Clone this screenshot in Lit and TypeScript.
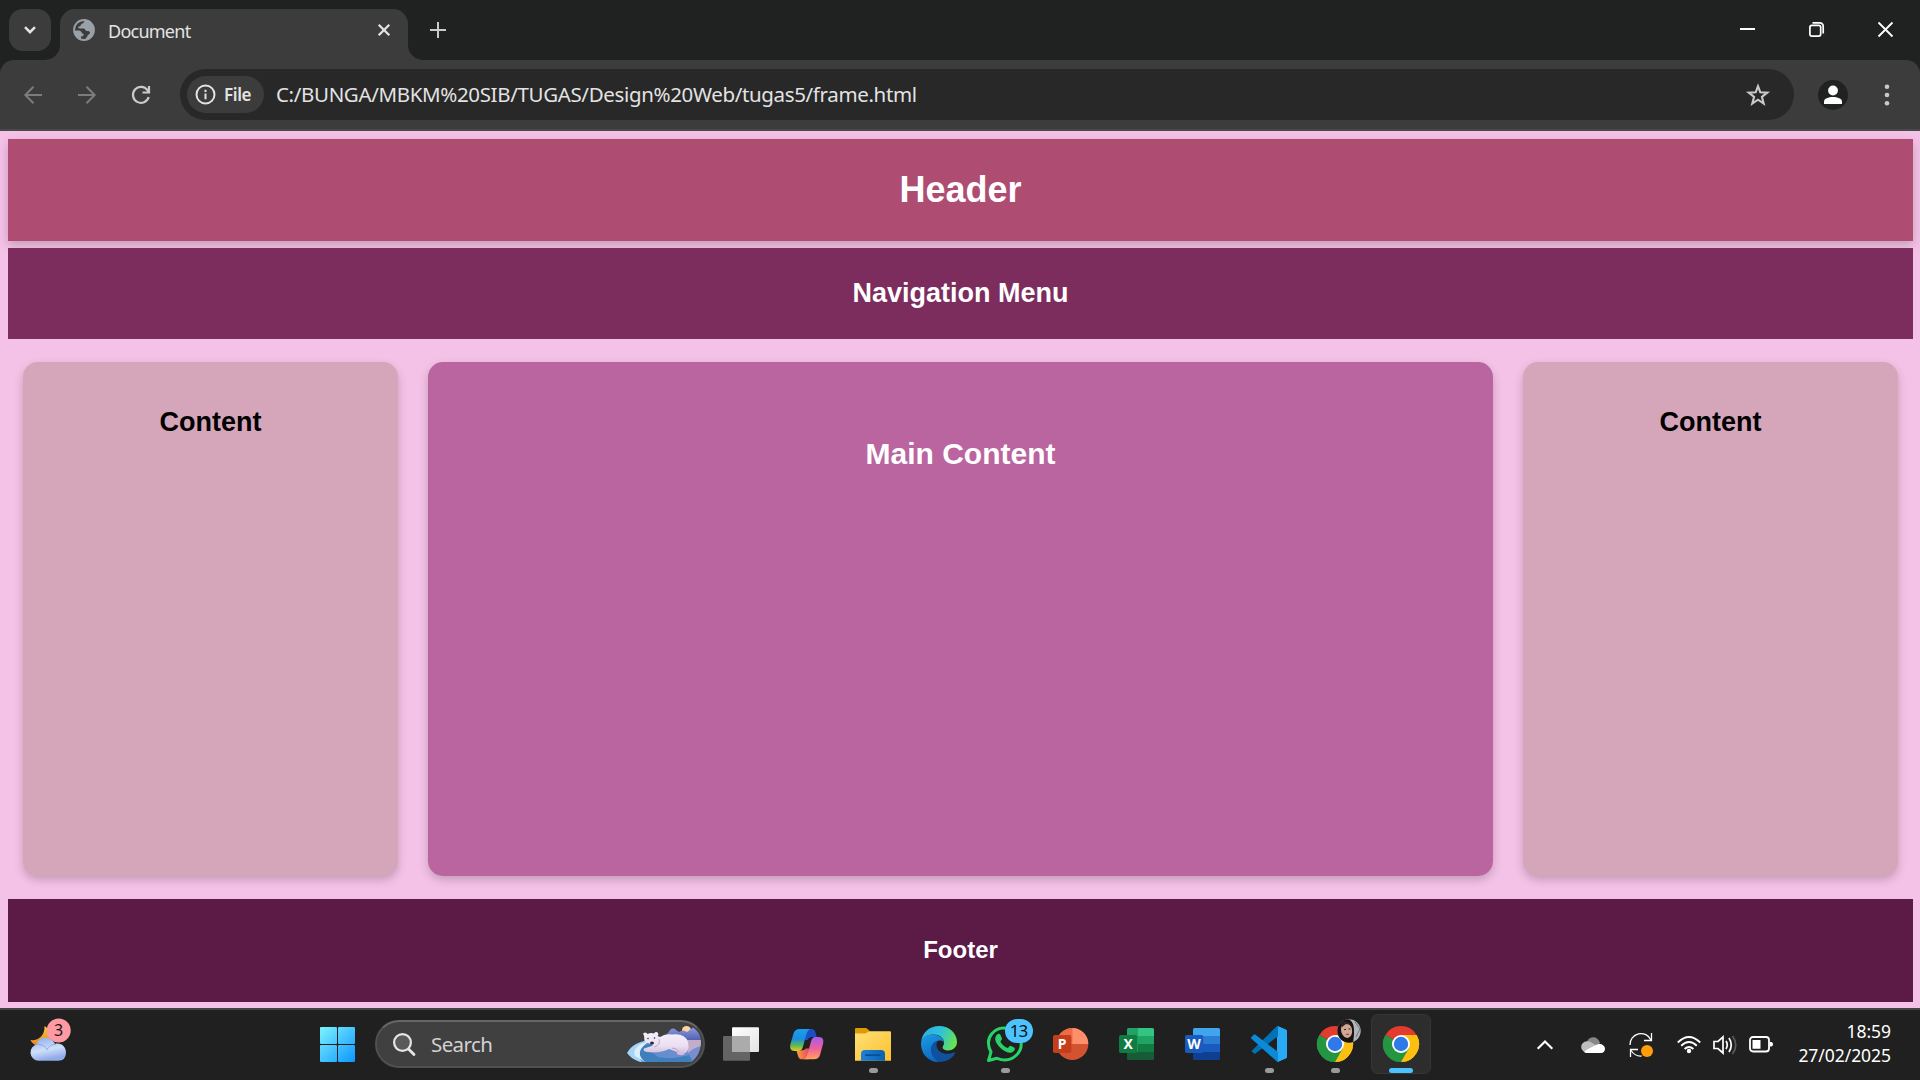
import { LitElement, html, css, svg, nothing } from "lit";
import { customElement, property } from "lit/decorators.js";

const UI_FONT = css`"Segoe UI", "Noto Sans", "Open Sans", sans-serif`;

@customElement("browser-chrome")
class BrowserChrome extends LitElement {
  static styles = css`
    :host { display: block; font-family: ${UI_FONT}; color: #e3e3e3; background: #202221; }
    svg { display: block; flex: none; overflow: visible; }
    .strip { display: flex; height: 60px; padding-left: 9px; box-sizing: border-box; }
    .picker { width: 42px; height: 42px; margin: 9px 9px 0 0; border-radius: 14px; background: #3c3c3c; display: grid; place-items: center; }
    .tab { position: relative; width: 348px; height: 51px; margin-top: 9px; box-sizing: border-box; padding: 0 18px 9px 13px; border-radius: 15px 15px 0 0; background: #3c3c3c; display: flex; align-items: center; }
    .flare { position: absolute; bottom: 0; }
    .flare.l { left: -15px; }
    .flare.r { right: -15px; }
    .title { flex: 1; padding: 2px 0 0 13px; font-size: 18px; line-height: 24px; letter-spacing: -0.75px; }
    .plus { margin: 22px 0 0 22px; }
    .win { margin-left: auto; display: flex; gap: 54px; padding: 22px 27px 0 0; }
    .bar { display: flex; align-items: center; height: 71px; box-sizing: border-box; background: #3c3c3c; border-bottom: 2px solid #484a49; border-radius: 14px 14px 0 0; padding: 0 29px 0 24px; }
    .nav { display: flex; gap: 36px; margin-right: 30px; }
    .omni { flex: 1; height: 51px; border-radius: 26px; background: #282828; display: flex; align-items: center; padding: 0 24px 0 7px; }
    .chip { width: 77px; height: 37px; border-radius: 19px; background: #3c3c3c; display: flex; align-items: center; gap: 8px; padding-left: 8px; box-sizing: border-box; font-size: 17px; font-weight: 600; letter-spacing: -0.4px; }
    .url { flex: 1; margin-left: 12px; padding-bottom: 2px; font-size: 20.5px; line-height: 28px; letter-spacing: -0.35px; white-space: nowrap; }
    .me { margin: 0 35px 0 24px; }
  `;
  render() {
    return html`
      <div class="strip">
        <div class="picker"><svg width="14" height="8" viewBox="0 0 14 8"><path d="M2 1.2l5 5 5-5" fill="none" stroke="#e3e3e3" stroke-width="2.6"/></svg></div>
        <div class="tab">
          <svg class="flare l" width="15" height="15"><path d="M15 0V15H0A15 15 0 0 0 15 0Z" fill="#3c3c3c"/></svg>
          <svg class="flare r" width="15" height="15"><path d="M0 0V15H15A15 15 0 0 1 0 0Z" fill="#3c3c3c"/></svg>
          <svg width="22" height="22" viewBox="0 0 22 22">
            <circle cx="11" cy="11" r="10" fill="#3c3c3c" stroke="#9aa0a8" stroke-width="1.8"/>
            <path d="M13 1.2C10 1.5 12 4 9.5 4.5C7.5 5 8.5 7 6 7.5C4.500 8 5 9.500 7 9.500H10.500C12.500 9.500 12 12 14 12C16 12 17 12.500 17 14C17 15.500 15 15 14.500 17C14 18.500 13 18 12.500 20.800C17 20 21 16.500 21 11C21 5.500 17.500 1.700 13 1.200Z" fill="#9aa0a8"/>
            <path d="M1.200 11.500H6C8.500 11.500 8.500 14.500 10.500 15C11.500 15.500 10 17.500 8 17.500V20.500C4 19.500 1.200 16 1.200 11.500Z" fill="#9aa0a8"/>
          </svg>
          <span class="title">Document</span>
          <svg width="12" height="12" viewBox="0 0 12 12"><path d="M.7.7l10.600 10.600M11.300.7L.7 11.300" stroke="#e3e3e3" stroke-width="2.300"/></svg>
        </div>
        <svg class="plus" width="16" height="16" viewBox="0 0 16 16"><path d="M8 0V16M0 8H16" stroke="#c9cac9" stroke-width="2"/></svg>
        <div class="win">
          <svg width="15" height="15"><path d="M0 7H15" stroke="#fff" stroke-width="2"/></svg>
          <svg width="15" height="15" fill="none" stroke="#fff" stroke-width="1.700"><rect x=".9" y="3.300" width="10.800" height="10.800" rx="2"/><path d="M3.500.9H10.500Q14.200.9 14.200 4.600V11.500"/></svg>
          <svg width="15" height="15"><path d="M.5.5l14 14M14.500.5l-14 14" stroke="#fff" stroke-width="1.800"/></svg>
        </div>
      </div>
      <div class="bar">
        <div class="nav">
          <svg width="18" height="18" fill="none" stroke="#7b7c7b" stroke-width="2"><path d="M18 9H1.500M9.500 .8L1.300 9L9.500 17.200"/></svg>
          <svg width="18" height="18" fill="none" stroke="#7b7c7b" stroke-width="2"><path d="M0 9H16.500M8.500 .8L16.700 9L8.500 17.200"/></svg>
          <svg width="18" height="18" fill="none" stroke="#c9cac9" stroke-width="2.200"><path d="M16.700 11A8 8 0 1 1 15.500 4.200L17 6M17 0V6.500H10.500"/></svg>
        </div>
        <div class="omni">
          <div class="chip">
            <svg width="21" height="21" fill="none" stroke="#e3e3e3" stroke-width="2"><circle cx="10.500" cy="10.500" r="9"/><path d="M10.500 9.500V15.200M10.500 5.800V7.900"/></svg>
            <span>File</span>
          </div>
          <span class="url">C:/BUNGA/MBKM%20SIB/TUGAS/Design%20Web/tugas5/frame.html</span>
          <svg width="24" height="24" viewBox="0 0 24 24"><path d="M12 3.200L14.300 9.300L21.200 9.700L15.900 13.800L17.700 20.500L12 16.700L6.300 20.500L8.100 13.800L2.800 9.700L9.700 9.300Z" fill="none" stroke="#c9cac9" stroke-width="2.100"/></svg>
        </div>
        <svg class="me" width="30" height="30"><circle cx="15" cy="15" r="15" fill="#202221"/><circle cx="15" cy="10.500" r="4.900" fill="#fff"/><path d="M6 24V21.500C6 15.500 24 15.500 24 21.500V24Z" fill="#fff"/></svg>
        <svg width="8" height="24" fill="#c9cac9"><circle cx="4" cy="3.700" r="2.300"/><circle cx="4" cy="12" r="2.300"/><circle cx="4" cy="20.300" r="2.300"/></svg>
      </div>`;
  }
}

@customElement("frame-page")
class FramePage extends LitElement {
  static styles = css`
    :host { display: flex; flex-direction: column; box-sizing: border-box; height: 877px; padding: 8px 7px 6px 8px; background: #f5c2e7; font-family: Arial, "Liberation Sans", sans-serif; font-weight: 700; color: #fff; text-align: center; }
    .header { flex: none; height: 102px; line-height: 101px; background: #ae4c72; font-size: 36px; box-shadow: 0 4px 10px rgba(0, 0, 0, 0.2); }
    .menu { flex: none; height: 91px; line-height: 91px; margin-top: 7px; background: #7c2d5e; font-size: 27px; z-index: 1; }
    .columns { flex: 1; display: flex; gap: 30px; margin: 23px 15px; }
    .card { border-radius: 15px; box-sizing: border-box; box-shadow: 0 4px 10px rgba(0, 0, 0, 0.2); }
    .side { width: 375px; padding-top: 45px; background: #d5a5b9; color: #000; font-size: 27px; line-height: 31px; }
    .main { flex: 1; padding-top: 75px; background: #ba659f; font-size: 30px; line-height: 34px; }
    .footer { flex: none; height: 103px; line-height: 102px; background: #5c1a47; font-size: 24px; z-index: 1; }
  `;
  render() {
    return html`
      <div class="header">Header</div>
      <div class="menu">Navigation Menu</div>
      <div class="columns">
        <div class="card side">Content</div>
        <div class="card main">Main Content</div>
        <div class="card side">Content</div>
      </div>
      <div class="footer">Footer</div>`;
  }
}

const chrome = svg`
  <path d="M33 34L17.400 25A18 18 0 0 1 48.600 25Z" fill="#e33b2e"/>
  <path d="M33 34L48.600 25A18 18 0 0 1 33 52Z" fill="#fbbc0c"/>
  <path d="M33 34L33 52A18 18 0 0 1 17.400 25Z" fill="#249a45"/>
  <path d="M33 25H48.600A18 18 0 0 1 33 52L40.800 38.500Z" fill="#fcc010"/>
  <path d="M25.200 38.500L17.400 25A18 18 0 0 0 33 52L40.800 38.500Z" fill="#249642"/>
  <circle cx="33" cy="34" r="9" fill="#fff"/><circle cx="33" cy="34" r="7.200" fill="#3079e8"/>`;

const letterTile = (color: string, letter: string) => svg`
  <rect x="15" y="25" width="18.300" height="18" rx="1.800" fill=${color}/>
  <text x="24.100" y="39" font-size="14" font-weight="700" text-anchor="middle" fill="#fff">${letter}</text>`;

const icons: Record<string, unknown> = {
  taskview: svg`
    <rect x="15" y="26" width="27" height="24.700" rx="1" fill="#646464"/>
    <rect x="24" y="17.300" width="27" height="24.700" rx="1" fill="url(#tv)"/>
    <path d="M24 26H42V42H24Z" fill="#ababab"/>
    <defs><linearGradient id="tv" x2="1" y2="1"><stop stop-color="#fff"/><stop offset="1" stop-color="#e3e3e3"/></linearGradient></defs>`,
  copilot: svg`
    <defs>
      <linearGradient id="c1" x2="0" y2="1"><stop stop-color="#19a0ef"/><stop offset=".45" stop-color="#1b8be0"/><stop offset=".75" stop-color="#5fb858"/><stop offset="1" stop-color="#e8cb18"/></linearGradient>
      <linearGradient id="c2" x2="0" y2="1"><stop stop-color="#a45cf0"/><stop offset=".5" stop-color="#ec5fa0"/><stop offset="1" stop-color="#ffa25c"/></linearGradient>
      <linearGradient id="c3" x2="1" y2="0"><stop stop-color="#f8a33a"/><stop offset="1" stop-color="#ea4862"/></linearGradient>
    </defs>
    <path d="M31 19H37.500C40 19 41 20.500 41.700 23L42.700 27H38.500C35.500 27 34.500 28 33.500 30H31Z" fill="#1c4ec4"/>
    <path d="M34.500 49.300H28C25 49.300 24.500 47.500 23.600 44.500L22.500 40.500H27C29.500 40.500 31 39.500 32 38.500H35Z" fill="url(#c3)"/>
    <path d="M25.500 19H36.500C34 19.500 33 22 32 25.500L29 36.500C28.200 39.500 27 41 24 41H20.500C16.500 41 15.500 38 16.500 34L19.500 23.500C20.500 20.500 22.500 19 25.500 19Z" fill="url(#c1)"/>
    <path d="M40 49.300H29.500C31.800 49 32.800 46.500 33.800 43L37 31.500C37.800 28.500 39 27 41.500 27H45C49 27 50 30 49 34L46 45C45 48 43 49.300 40 49.300Z" fill="url(#c2)"/>`,
  explorer: svg`
    <defs><linearGradient id="f1" x2="1" y2="1"><stop stop-color="#ffe07a"/><stop offset="1" stop-color="#fcc02b"/></linearGradient>
    <linearGradient id="f2" x2="1" y2="0"><stop stop-color="#1c82d6"/><stop offset="1" stop-color="#0a62b4"/></linearGradient></defs>
    <path d="M15 19Q15 18 16 18H25.500Q26.500 18 27.500 19L30 21.300L27 24H15Z" fill="#dd9c03"/>
    <path d="M15 23.500H25C27.500 23.500 28 21.300 30 21.300H50Q51 21.300 51 22.300V50.700H15Z" fill="url(#f1)"/>
    <path d="M21 50.700V44Q21 40 25 40H41Q45 40 45 44V50.700Z" fill="url(#f2)"/>
    <path d="M26 45.200H40" stroke="#0a4f92" stroke-width="1.800" stroke-linecap="round"/>`,
  edge: svg`
    <defs>
      <linearGradient id="e1" x1="0" y1=".3" x2="1" y2=".6"><stop stop-color="#2baee8"/><stop offset=".5" stop-color="#2fc3d6"/><stop offset="1" stop-color="#6be44a"/></linearGradient>
      <linearGradient id="e2" x2=".4" y2="1"><stop stop-color="#1b9de2"/><stop offset="1" stop-color="#0d68c4"/></linearGradient>
    </defs>
    <path d="M15.200 32C16 22.500 23.500 16 33 16C43.500 16 51 23.500 51 32C51 37.500 46.500 40.500 42 40.500C38.500 40.500 36.500 39 36.500 37.500C36.500 36.500 38 35.500 38 32.500C38 28 33 24.500 27.500 24.500C21 24.500 16.500 28 15.200 32Z" fill="url(#e1)"/>
    <path d="M15 34C15 28 20 24.500 26.500 24.500C33 24.500 38 28.500 38 32.500C35 29 29.500 30.500 27 35C24 41 28 50 34 52C23 53 15 44 15 34Z" fill="url(#e2)"/>
    <path d="M29.500 31.500C26 33.500 24.500 37 25 41C26 47 30 51.500 35 51.900C41.500 51.500 46.500 48 48.800 43.500C49.300 42.500 48.600 42.100 47.800 42.500C40 46 31 42.500 30.500 35.500C30.400 33.500 31 32 32 30.700Z" fill="#11509c"/>`,
  whatsapp: svg`
    <path d="M16.500 50.500L19 42C11 27 24 15.500 36 18.500C50 22 53 37 44 45.500C38 51 30.500 50.500 25 48.300Z" fill="#202020" stroke="#27d366" stroke-width="3" stroke-linejoin="round"/>
    <path d="M26.500 25.500C27.500 25 28.500 25.500 29 26.500L30.500 30C30.800 31 29 32.500 28.900 33.300C30.500 36.300 33 38.300 36 39.500C37 39.500 38.200 37 39.200 37.300L43 39.200C44 40 43 43 40 44C35 45.500 25 38 23.700 31C23.500 28.500 25 26 26.500 25.500Z" transform="translate(-.5 -1.500)" fill="#27d366"/>
    <rect x="33" y="9" width="28" height="24" rx="12" fill="#4cc2ff"/>
    <text x="46.600" y="26.800" font-size="17" letter-spacing="-1" text-anchor="middle" fill="#101010">13</text>`,
  powerpoint: svg`
    <circle cx="34.300" cy="34" r="16" fill="#d35230"/><path d="M34.300 34V18A16 16 0 0 0 18.300 34Z" fill="#ed6c47"/><path d="M34.300 34V18A16 16 0 0 1 50.300 34Z" fill="#ff8f6b"/>
    ${letterTile("#c43e1c", "P")}`,
  excel: svg`
    <rect x="23" y="18" width="27" height="32" rx="1.500" fill="#185c37"/>
    <path d="M23 19.500Q23 18 24.500 18H34V42H23Z" fill="#21a366"/><path d="M34 18H48.500Q50 18 50 19.500V26H34Z" fill="#33c481"/>
    <path d="M34 26H50V34H34Z" fill="#21a366"/><path d="M34 34H50V42H34Z" fill="#107c41"/>${letterTile("#107c41", "X")}`,
  word: svg`
    <rect x="23" y="18" width="27" height="32" rx="1.500" fill="#103f91"/>
    <path d="M23 26V19.500Q23 18 24.500 18H48.500Q50 18 50 19.500V26Z" fill="#41a5ee"/>
    <path d="M23 26H50V34H23Z" fill="#2b7cd3"/><path d="M23 34H50V42H23Z" fill="#185abd"/>${letterTile("#185abd", "W")}`,
  vscode: svg`
    <path d="M42 16.300L50 19.800Q51 20.300 51 21.500V46.500Q51 47.700 50 48.200L42 51.800Q41 52 41 51V17Q41 16 42 16.300Z" fill="#2aa9f4"/>
    <path d="M15.500 41L40.500 16.500L42.300 16.300V26L19.500 43.500Q18.500 44 17.700 43.300L15.500 41Z" fill="#0072b8"/>
    <path d="M15.500 27L17.700 24.800Q18.500 24 19.500 24.700L42 42V51.700Q41.300 52 40.300 51L15.500 28.800Q14.500 27.900 15.500 27Z" fill="#0c8ad8"/>
    <path d="M42 16.300L50 19.800Q51 20.300 51 21.500V46.500Q51 47.700 50 48.200L42 51.800Z" fill="#2aa9f4"/>`,
  chromeProfile: svg`${chrome}
    <clipPath id="av"><circle cx="47" cy="21" r="11.700"/></clipPath>
    <g clip-path="url(#av)"><path d="M35 9H59V33H35Z" fill="#b2b5ba"/><path d="M35 9H46C53 12 52 20 52 25L51 33H35Z" fill="#161314"/>
    <ellipse cx="44.500" cy="20.500" rx="5.500" ry="7.500" fill="#cfa792" transform="rotate(-12 44.500 20)"/><path d="M39 13Q45 9 49 15L44 14L40 17Z" fill="#33231f"/>
    <path d="M42 19.500H44M46.500 19H48.500" stroke="#3a2622" stroke-width="1"/><path d="M44 24.300H47" stroke="#a14d4c" stroke-width="1.200"/><path d="M53 12L58 19L54 27" fill="none" stroke="#72757b" stroke-width="1"/></g>`,
  chrome,
};

interface App { icon: string; state?: "open" | "active"; }
const apps: App[] = [
  { icon: "taskview" }, { icon: "copilot" }, { icon: "explorer", state: "open" }, { icon: "edge" },
  { icon: "whatsapp", state: "open" }, { icon: "powerpoint" }, { icon: "excel" }, { icon: "word" },
  { icon: "vscode", state: "open" }, { icon: "chromeProfile", state: "open" }, { icon: "chrome", state: "active" },
];

@customElement("task-icon")
class TaskIcon extends LitElement {
  @property({ attribute: false }) app!: App;
  static styles = css`
    :host { display: block; width: 66px; height: 70px; font-family: ${UI_FONT}; }
    svg { display: block; }
  `;
  render() {
    const s = this.app.state;
    return html`<svg width="66" height="70" viewBox="0 0 66 70">
      ${s === "active" ? svg`<rect x="3.500" y="4.500" width="59" height="59" rx="6" fill="#2d2d2d" stroke="#363636"/>` : nothing}
      ${icons[this.app.icon]}
      ${s === "open" ? svg`<rect x="29" y="58" width="9" height="5" rx="2.500" fill="#9a9a9a"/>` : nothing}
      ${s === "active" ? svg`<rect x="21" y="58" width="24" height="5" rx="2.500" fill="#4cc2ff"/>` : nothing}
    </svg>`;
  }
}

@customElement("task-bar")
class TaskBar extends LitElement {
  static styles = css`
    :host { display: flex; align-items: center; box-sizing: border-box; height: 72px; border-top: 2px solid #444; background: #202020; padding: 0 29px 0 28px; font-family: ${UI_FONT}; color: #fff; }
    svg { display: block; flex: none; overflow: visible; }
    .start { margin: -1px 20px 0 248px; }
    .search { display: flex; align-items: center; box-sizing: border-box; width: 330px; height: 48px; margin: -2px 3px 0 0; border: 2px solid #505050; border-top-color: #666; border-radius: 24px; background: #404040; padding: 0 2px 0 16px; }
    .hint { flex: 1; padding: 0 0 0 16px; font-size: 20.5px; line-height: 28px; letter-spacing: -0.6px; color: #d2d2d2; }
    .apps { display: flex; }
    .tray { display: flex; align-items: center; margin-left: auto; }
    .tray > svg { margin-top: -1px; }
    .up { margin-right: 28px; }
    .gap { margin-right: 24px; }
    .near { margin-right: 12px; }
    .clock { width: 106px; margin: -4px 0 0 12px; text-align: right; font-size: 17.500px; line-height: 24px; letter-spacing: -0.05px; white-space: nowrap; }
  `;
  render() {
    return html`
      <svg width="44" height="70" viewBox="28 0 44 70">
        <defs><linearGradient id="moon" x2="0" y2="1"><stop stop-color="#f6c935"/><stop offset="1" stop-color="#ef8222"/></linearGradient>
        <linearGradient id="cloud" x2=".3" y2="1"><stop stop-color="#83abf0"/><stop offset=".6" stop-color="#cfdff8"/><stop offset="1" stop-color="#90abea"/></linearGradient></defs>
        <path d="M44.500 16C53 21 52 35 42 36C37 36.500 32 34 30.500 30C38 31 45 26 44.500 16Z" fill="url(#moon)"/>
        <path d="M38.500 50.700A8.300 8.300 0 0 1 37 34.300C38 26 51 25 55 34C61 32 66 37 66 42.500Q66 50.700 58 50.700Z" fill="url(#cloud)"/>
        <path d="M37 34Q46 35 47 40Q49 34.500 56 34.200" fill="none" stroke="#759ce6" stroke-width="1" opacity=".7"/>
        <circle cx="58.700" cy="20.500" r="12" fill="#ff99a4"/>
        <text x="58.700" y="26" font-size="16" text-anchor="middle" fill="#151515">3</text>
      </svg>
      <svg class="start" width="35" height="35"><defs><linearGradient id="win" x2="35" y2="35" gradientUnits="userSpaceOnUse"><stop stop-color="#7df3ff"/><stop offset=".5" stop-color="#46c4ff"/><stop offset="1" stop-color="#0a98ff"/></linearGradient></defs>
        <g fill="url(#win)"><rect width="17" height="17" rx="1"/><rect x="18" width="17" height="17" rx="1"/><rect y="18" width="17" height="17" rx="1"/><rect x="18" y="18" width="17" height="17" rx="1"/></g></svg>
      <div class="search">
        <svg width="22" height="23" fill="none" stroke="#e6e6e6" stroke-width="2.200"><circle cx="9.500" cy="9.500" r="8.400" fill="#5a5a5a"/><path d="M15.500 16L21 21.600" stroke-width="2.800" stroke-linecap="round"/></svg>
        <span class="hint">Search</span>
        <svg width="74" height="36" viewBox="0 0 74 36">
          <defs>
            <clipPath id="scene"><path d="M0 27C4 19 12 15 24 14L37 13L40 4L68 0C76 7 77 28 64 36H14C7 34 3 31 0 27Z"/></clipPath>
            <linearGradient id="sky" x2="1" y2="0"><stop stop-color="#4e8fce"/><stop offset="1" stop-color="#7b8ed0"/></linearGradient>
            <linearGradient id="hill" x2="0" y2="1"><stop stop-color="#8b9ade"/><stop offset="1" stop-color="#5360b0"/></linearGradient>
            <linearGradient id="fur" x2="0" y2="1"><stop stop-color="#f6effb"/><stop offset=".6" stop-color="#ebdff1"/><stop offset="1" stop-color="#cdb5d6"/></linearGradient>
          </defs>
          <g clip-path="url(#scene)">
            <path d="M0 14H74V36H0Z" fill="url(#sky)"/>
            <path d="M60 14H74V20Q66 22 61 27Z" fill="#c0aeca"/>
            <path d="M0 27C6 17 14 15 26 14C14 19 8 27 15 36H8Z" fill="#a7d4f4"/>
            <path d="M8 30C5 22 14 17 21 16C14 21 10 28 18 36Z" fill="#dceefa"/>
            <path d="M13 29C12 22 18 18 26 17Q20 24 31 31Q44 34 62 29L66 36H20Q14 34 13 29Z" fill="#3f7fbd"/>
          </g>
          <circle cx="59.500" cy="4.500" r="4.500" fill="#ffd1a1"/>
          <path d="M36 10L41 7Q45 0 49 4L52 6Q56 3 60 6L66 1.500Q73 6 74 14H40Z" fill="url(#hill)"/>
          <path d="M17 9.500Q15 7 18 6.500Q20 6.500 20.500 8Q24 6.300 27 7.500Q29 5 31 7Q32 9 30.500 10L33 11Q38 7.500 45 8.500Q58 7 61 16Q63 25 58 27Q57 30 53 29Q49 29 50 26L42 23Q33 27.500 20 26Q15.500 25.500 17 22.500L25 20Q27 19 24 18Q20 17.500 17.500 15Z" fill="url(#fur)"/>
          <ellipse cx="25" cy="17" rx="2" ry="1.500" fill="#302c3d"/><circle cx="21" cy="12.500" r=".8" fill="#302c3d"/><circle cx="27.500" cy="12" r=".8" fill="#302c3d"/>
          <path d="M32 13Q34 19 27 21M45 22Q50 22 52 26" stroke="#bda4c7" fill="none"/>
        </svg>
      </div>
      <div class="apps">${apps.map((a) => html`<task-icon .app=${a}></task-icon>`)}</div>
      <div class="tray">
        <svg class="up" width="16" height="10" fill="none" stroke="#fff" stroke-width="2.200"><path d="M.7 8.700L8 1.500L15.300 8.700"/></svg>
        <svg class="gap" width="24" height="16"><path d="M6 4.500C9-1.500 17-1 19 6L8 12Z" fill="#878787"/><path d="M5 15.500C-2 14-1 4.500 6 4.300Q9 4 12 6.500L19 10L12 15.500Z" fill="#bdbdbd"/><path d="M3 15Q6 12 9 11L16 7.500Q18 6 20.500 7.300Q24 9 24 12Q23.500 16 20 16H5Z" fill="#fff"/></svg>
        <svg class="gap" width="24" height="24"><g fill="none" stroke="#fff" stroke-width="1.300"><path d="M1 12A11 11 0 0 1 22 7M22.500 0V7.500H15M1.500 24V16.500H9M2 17.500Q6 23.500 12.500 23"/></g><circle cx="18" cy="18" r="6" fill="#ff9d0a"/></svg>
        <svg class="near" width="24" height="17" fill="none" stroke="#fff" stroke-width="1.900"><path d="M.8 6.500Q12-4.500 23.200 6.500M4.200 9.800Q12 2.300 19.800 9.800M7.600 13Q12 8.800 16.400 13"/><circle cx="12" cy="15" r="2.200" fill="#fff" stroke="none"/></svg>
        <svg class="near" width="24" height="20" fill="none" stroke="#fff" stroke-width="1.700"><path d="M1 6.500H5L10 2V18L5 13.500H1ZM13 6Q15.500 10 13 14M16 3Q20.500 10 16 17"/><path d="M19.500 1Q26 10 19.500 19" stroke="#5a5a5a"/></svg>
        <svg width="24" height="17" fill="none" stroke="#fff" stroke-width="1.800"><rect x="1" y="1" width="19" height="14.500" rx="3"/><path d="M3.500 4H11.500V12.800H3.500ZM21 6H22.500Q24 6.500 24 8.200Q24 10 22.500 10.500H21Z" fill="#fff" stroke="none"/></svg>
        <div class="clock"><div>18:59</div><div>27/02/2025</div></div>
      </div>`;
  }
}

@customElement("app-root")
class AppRoot extends LitElement {
  static styles = css`
    :host { display: block; width: 1920px; height: 1080px; overflow: hidden; }
  `;
  render() {
    return html`<browser-chrome></browser-chrome><frame-page></frame-page><task-bar></task-bar>`;
  }
}
